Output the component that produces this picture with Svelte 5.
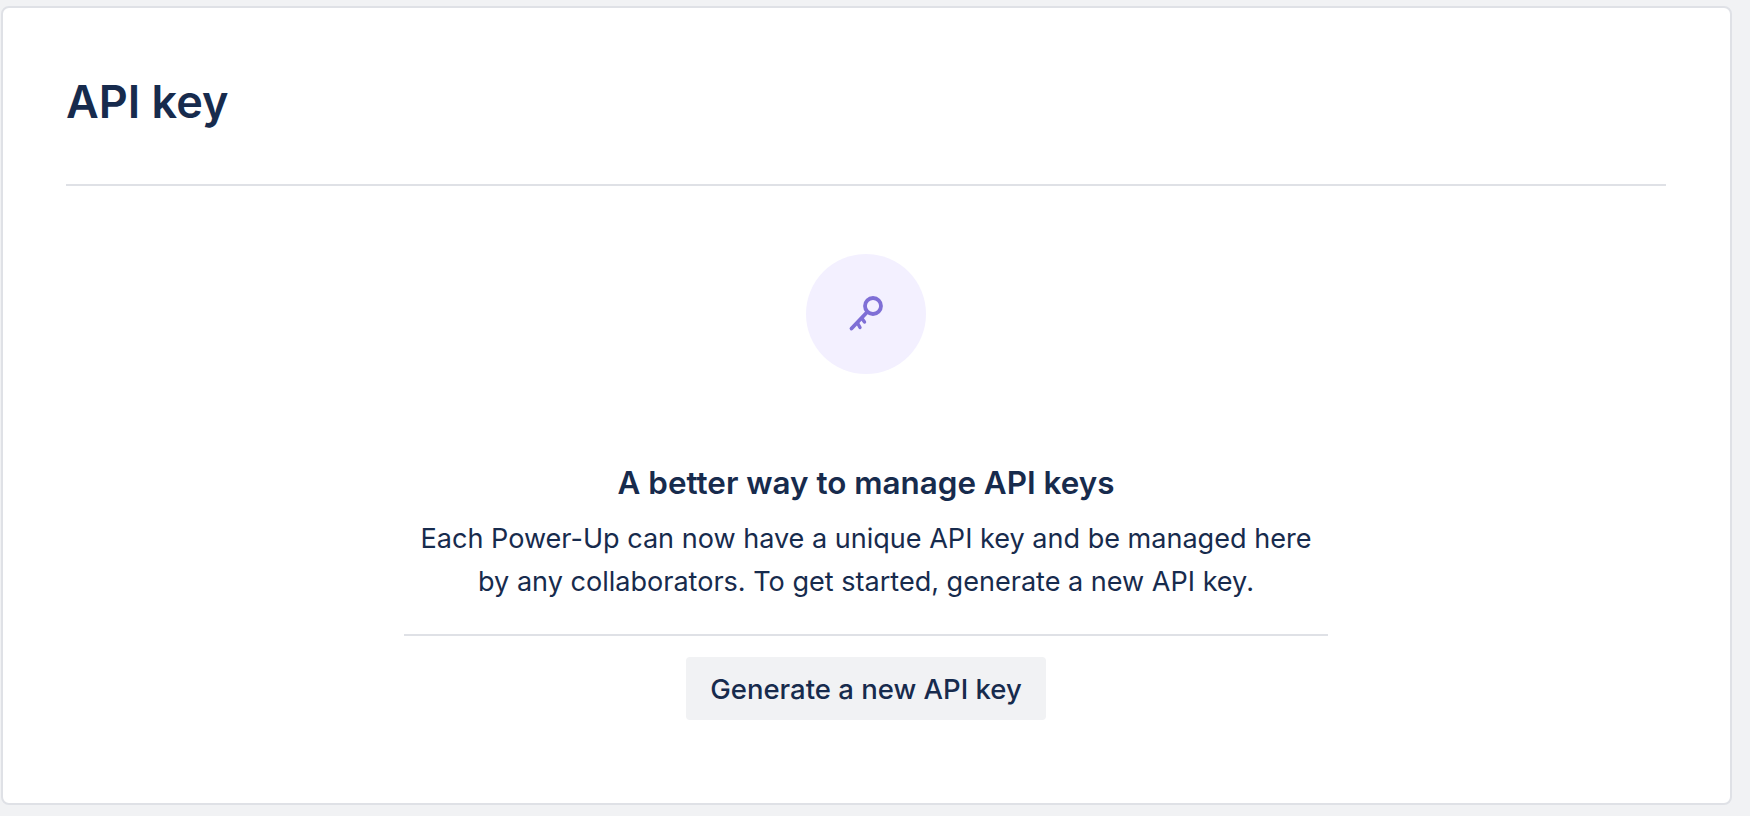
<script>
    let title = "API key";
</script>

<div class="page">
    <section class="card">
        <h1>{title}</h1>
        <hr class="rule" />
        <div class="empty">
            <div class="icon-circle">
                <svg width="40" height="40" viewBox="0 0 40 40" fill="none" stroke="#7f6fd6" stroke-width="3.8" stroke-linecap="round">
                    <circle cx="27" cy="12" r="8" />
                    <path d="M21 18.2 L5.5 34.5" />
                    <path d="M11.5 29 L14 33.5" stroke-width="3.4" />
                    <path d="M16 24.5 L18.5 28" stroke-width="3.4" />
                </svg>
            </div>
            <h2>A better way to manage API keys</h2>
            <p>Each Power-Up can now have a unique API key and be managed here<br />by any collaborators. To get started, generate a new API key.</p>
            <hr class="rule short" />
            <button type="button">Generate a new API key</button>
        </div>
    </section>
</div>

<style>
    :global(body) {
        background: #f1f2f4;
        font-family: Inter, "Liberation Sans", sans-serif;
        color: #172b4d;
    }
    .page {
        height: 816px;
        box-sizing: border-box;
        padding: 6px 18px 11px 1px;
    }
    .card {
        height: 100%;
        box-sizing: border-box;
        background: #fff;
        border: 2px solid #dfe1e6;
        border-radius: 8px;
        padding: 0 64px 0 63px;
    }
    h1 {
        margin: 0;
        padding-top: 68px;
        font-size: 45px;
        line-height: 52px;
        font-weight: 600;
    }
    .rule {
        margin: 0;
        border: none;
        height: 2px;
        background: #dfe1e6;
    }
    h1 + .rule {
        margin-top: 56px;
    }
    .empty {
        display: flex;
        flex-direction: column;
        align-items: center;
    }
    .icon-circle {
        width: 120px;
        height: 120px;
        margin-top: 68px;
        border-radius: 50%;
        background: #f3f0ff;
        display: flex;
        align-items: center;
        justify-content: center;
    }
    h2 {
        margin: 91px 0 0;
        font-size: 31.4px;
        line-height: 36px;
        font-weight: 600;
    }
    p {
        margin: 16px 0 0;
        font-size: 27.05px;
        line-height: 43px;
        text-align: center;
    }
    .short {
        width: 924px;
        margin-top: 31px;
    }
    button {
        margin-top: 21px;
        height: 63px;
        width: 360px;
        border: none;
        border-radius: 4px;
        background: #f1f2f4;
        color: #172b4d;
        font: 500 27.5px Inter, "Liberation Sans", sans-serif;
    }
</style>
